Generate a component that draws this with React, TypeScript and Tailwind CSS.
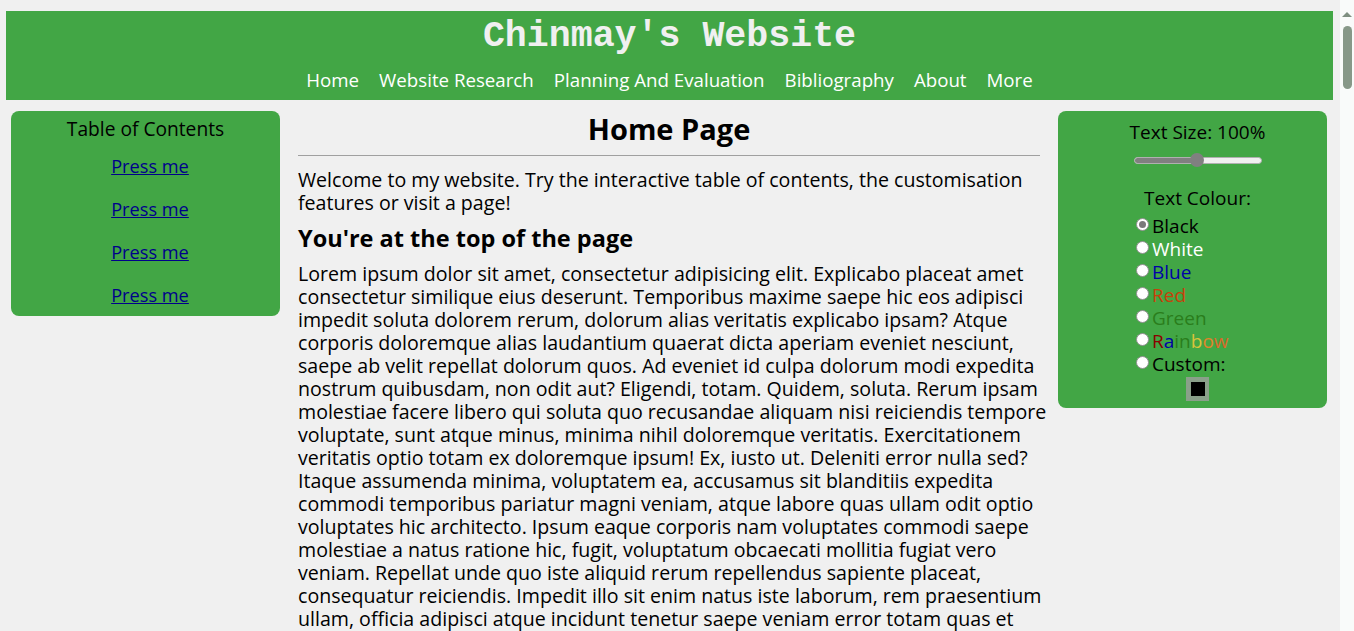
import React from "react";

const body = "font-['Open_Sans','Liberation_Sans',sans-serif]";

const navLinks = ["Home", "Website Research", "Planning And Evaluation", "Bibliography", "About", "More"];

const lorem = [
  "Lorem ipsum dolor sit amet, consectetur adipisicing elit. Explicabo placeat amet",
  "consectetur similique eius deserunt. Temporibus maxime saepe hic eos adipisci",
  "impedit soluta dolorem rerum, dolorum alias veritatis explicabo ipsam? Atque",
  "corporis doloremque alias laudantium quaerat dicta aperiam eveniet nesciunt,",
  "saepe ab velit repellat dolorum quos. Ad eveniet id culpa dolorum modi expedita",
  "nostrum quibusdam, non odit aut? Eligendi, totam. Quidem, soluta. Rerum ipsam",
  "molestiae facere libero qui soluta quo recusandae aliquam nisi reiciendis tempore",
  "voluptate, sunt atque minus, minima nihil doloremque veritatis. Exercitationem",
  "veritatis optio totam ex doloremque ipsum! Ex, iusto ut. Deleniti error nulla sed?",
  "Itaque assumenda minima, voluptatem ea, accusamus sit blanditiis expedita",
  "commodi temporibus pariatur magni veniam, atque labore quas ullam odit optio",
  "voluptates hic architecto. Ipsum eaque corporis nam voluptates commodi saepe",
  "molestiae a natus ratione hic, fugit, voluptatum obcaecati mollitia fugiat vero",
  "veniam. Repellat unde quo iste aliquid rerum repellendus sapiente placeat,",
  "consequatur reiciendis. Impedit illo sit enim natus iste laborum, rem praesentium",
  "ullam, officia adipisci atque incidunt tenetur saepe veniam error totam quas et",
];

function Radio({ checked }: { checked?: boolean }) {
  return (
    <span className="mt-[3px] mr-[3px] flex h-[13px] w-[13px] shrink-0 items-center justify-center rounded-full border border-[#8f8f8f] bg-white">
      {checked && <span className="h-[7px] w-[7px] rounded-full bg-[#7a7a7a]" />}
    </span>
  );
}

const colours = [
  { label: "Black", node: <span className="text-black">Black</span>, checked: true },
  { label: "White", node: <span className="text-white">White</span> },
  { label: "Blue", node: <span className="text-[#0000a8]">Blue</span> },
  { label: "Red", node: <span className="text-[#c8400a]">Red</span> },
  { label: "Green", node: <span className="text-[#2a7d1c]">Green</span> },
  {
    label: "Rainbow",
    node: (
      <span>
        <span className="text-[#8b0000]">R</span>
        <span className="text-[#0000a8]">a</span>
        <span className="text-[#2a7d1c]">i</span>
        <span className="text-[#2a7d1c]">n</span>
        <span className="text-[#d9c33a]">b</span>
        <span className="text-[#e0842a]">o</span>
        <span className="text-[#d96a2a]">w</span>
      </span>
    ),
  },
  { label: "Custom:", node: <span className="text-black">Custom:</span> },
];

function Scrollbar() {
  return (
    <div className="flex h-full w-[14px] shrink-0 flex-col items-center bg-[#f9fbfa] pt-[12px]">
      <div className="h-0 w-0 border-x-[5px] border-b-[5px] border-x-transparent border-b-[#7f8f81]" />
      <div className="mt-[9px] h-[63px] w-[9px] rounded-full bg-[#879888]" />
    </div>
  );
}

export default function App() {
  return (
    <div className={`flex h-[631px] overflow-hidden bg-[#f0f0f0] ${body}`}>
      <div className="w-[1340px] shrink-0 pt-[11px]">
        <header className="mr-[7px] ml-[6px] flex h-[89px] flex-col items-center bg-[#42a645]">
          <h1 className="mt-[5px] font-['Liberation_Mono',monospace] text-[36.6px] leading-[42px] font-bold text-[#f0f0f0]">
            Chinmay's Website
          </h1>
          <nav className="mt-[10px] flex gap-[20px] text-[18.7px] leading-[24px] text-white">
            {navLinks.map((l) => (
              <a key={l} href="#" className="no-underline">
                {l}
              </a>
            ))}
          </nav>
        </header>

        <div className="mt-[11px] grid grid-cols-[269px_742px_269px] gap-[18px] pl-[11px]">
          <aside className="flex h-[205px] flex-col items-center rounded-[8px] bg-[#42a645] pt-[6px]">
            <div className="text-[19.2px] leading-[23px] text-black">Table of Contents</div>
            <div className="mt-[15px] flex flex-col items-center gap-[20px] pl-[9px]">
              {[0, 1, 2, 3].map((i) => (
                <a key={i} href="#" className="text-[18.2px] leading-[23px] text-[#00008b] underline">
                  Press me
                </a>
              ))}
            </div>
          </aside>

          <main className="text-black">
            <h2 className="text-center text-[29px] leading-[36px] font-bold">Home Page</h2>
            <hr className="mt-[8px] border-t border-[#a0a0a0]" />
            <p className="mt-[12px] text-[19.6px] leading-[23px]">
              Welcome to my website. Try the interactive table of contents, the customisation
              <br />
              features or visit a page!
            </p>
            <h3 className="mt-[10px] text-[23.5px] leading-[28px] font-bold">You're at the top of the page</h3>
            <p className="mt-[10px] text-[19.6px] leading-[23px]">
              {lorem.map((line, i) => (
                <span key={i} className="block whitespace-nowrap">
                  {line}
                </span>
              ))}
            </p>
          </main>

          <aside className="flex h-[297px] flex-col items-center rounded-[8px] bg-[#42a645] pt-[10px] pl-[10px] text-black">
            <div className="text-[19px] leading-[23px]">Text Size: 100%</div>
            <div className="relative mt-[9px] flex h-[14px] w-[128px] items-center">
              <div className="h-[7px] w-full rounded-full border border-[#b0b0b0] bg-[#f0f0f0]">
                <div className="h-full w-[50%] rounded-l-full bg-[#808080]" />
              </div>
              <div className="absolute left-[56px] h-[14px] w-[14px] rounded-full bg-[#808080]" />
            </div>
            <div className="mt-[20px] text-[19px] leading-[23px]">Text Colour:</div>
            <div className="mt-[5px] ml-[68px] flex flex-col self-start">
              {colours.map((c) => (
                <div key={c.label} className="flex items-start text-[19px] leading-[23px]">
                  <Radio checked={c.checked} />
                  {c.node}
                </div>
              ))}
            </div>
            <div className="mt-[1px] flex h-[24px] w-[23px] items-center justify-center bg-[#8aa08a]">
              <div className="h-[14px] w-[14px] bg-black" />
            </div>
          </aside>
        </div>
      </div>
      <Scrollbar />
    </div>
  );
}
